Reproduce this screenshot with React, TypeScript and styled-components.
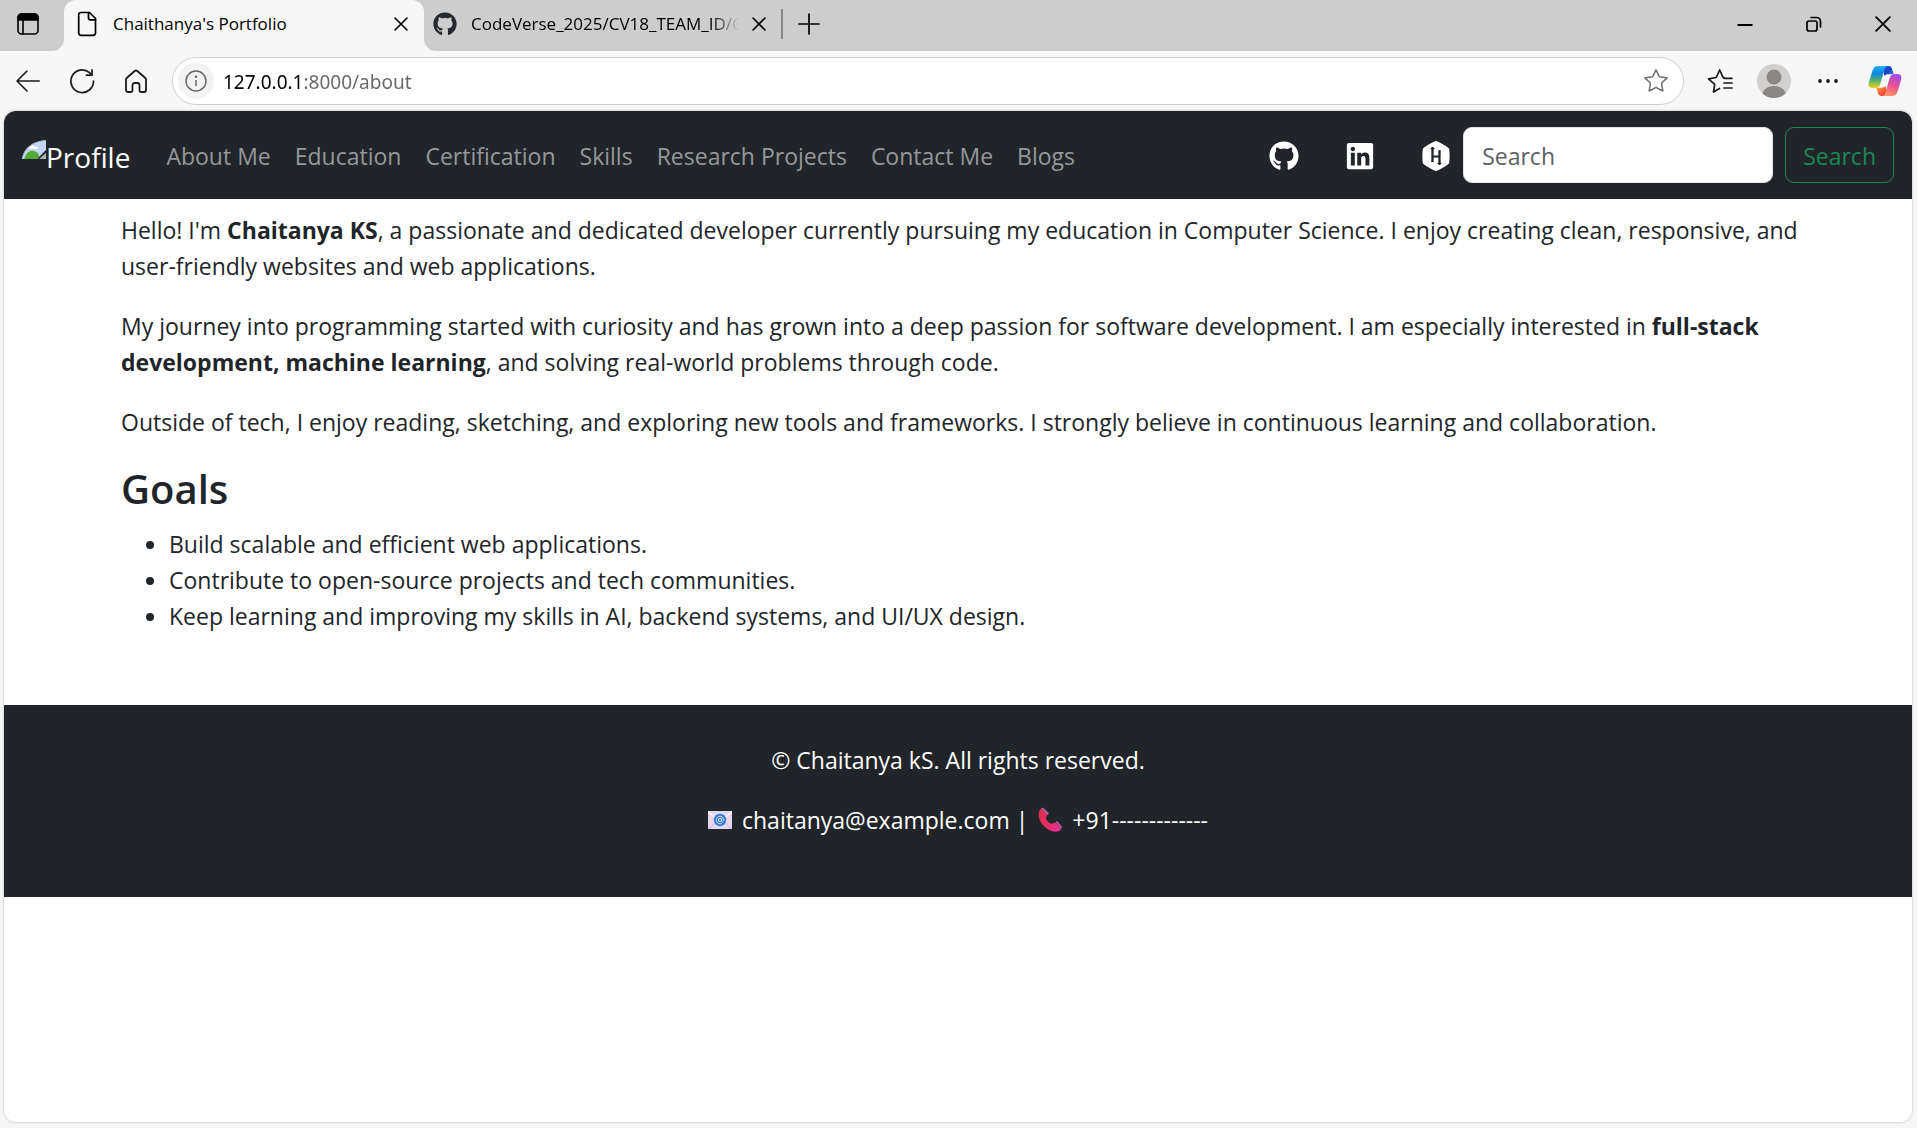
import React from "react";
import styled, { createGlobalStyle } from "styled-components";
import { FaGithub, FaLinkedin, FaHackerrank } from "react-icons/fa";

const ink = "#212529";
const strip = "#cdcdcd";
const chrome = "#f7f7f7";

const GlobalStyle = createGlobalStyle`
  *, *::before, *::after { box-sizing: border-box; }
  body {
    margin: 0;
    background: ${chrome};
    color: ${ink};
    font-family: "Open Sans", "Noto Sans", sans-serif;
    font-size: 23px;
    line-height: 36px;
  }
  button, input { font: inherit; color: inherit; }
  svg { display: block; flex: none; }
`;

const Window = styled.div`
  display: flex;
  flex-direction: column;
  min-height: 100vh;
`;

const TabStrip = styled.div`
  display: flex;
  height: 51px;
  background: ${chrome};
  font-size: 17px;
  line-height: 24px;
  color: #000;
`;

const StripStart = styled.div`
  display: flex;
  align-items: center;
  width: 64px;
  padding: 0 0 3px 16px;
  background: ${strip};
  border-bottom-right-radius: 12px;
`;

const StripRest = styled.div`
  display: flex;
  flex: 1;
  align-items: center;
  padding: 0 0 3px 9px;
  background: ${strip};
  border-bottom-left-radius: 12px;
`;

const ActiveTabCell = styled.div`
  width: 360px;
  background: ${strip};
`;

const ActiveTab = styled.div`
  display: flex;
  align-items: center;
  height: 100%;
  padding: 0 11px 3px 11px;
  background: ${chrome};
  border-radius: 12px 12px 0 0;
`;

const TabTitle = styled.span<{ $fade?: boolean }>`
  flex: ${(p) => (p.$fade ? "0 0 276px" : "1")};
  margin-left: 14px;
  overflow: hidden;
  white-space: nowrap;
  ${(p) => p.$fade && "mask-image: linear-gradient(90deg, #000 240px, transparent 268px);"}
`;

const IconButton = styled.button<{ $w?: number }>`
  display: flex;
  align-items: center;
  justify-content: center;
  width: ${(p) => p.$w ?? 24}px;
  height: 48px;
  padding: 0;
  border: 0;
  background: none;
`;

const TabDivider = styled.span`
  width: 2px;
  height: 30px;
  margin: 0 8px 0 10px;
  background: #8a8a8a;
`;

const WindowControls = styled.div`
  display: flex;
  margin-left: auto;
`;

const Toolbar = styled.div`
  display: flex;
  align-items: center;
  height: 60px;
  padding: 0 2px 0 1px;
  color: #1a1a1a;
`;

const AddressBar = styled.form`
  display: flex;
  flex: 1;
  align-items: center;
  height: 48px;
  margin: 0 9px;
  padding: 0 9px 0 5px;
  border: 1px solid #cfcfcf;
  border-radius: 24px;
  background: #fff;
`;

const InfoButton = styled.button`
  display: flex;
  align-items: center;
  justify-content: center;
  width: 36px;
  height: 36px;
  padding: 0;
  border: 0;
  border-radius: 50%;
  background: #f3f3f3;
`;

const AddressInput = styled.input`
  flex: 1;
  min-width: 0;
  height: 36px;
  margin-left: 9px;
  padding: 1px 0 0;
  border: 0;
  outline: 0;
  font-family: "Noto Sans", sans-serif;
  font-size: 19px;
  color: #666;
  background: linear-gradient(90deg, #000 82px, #666 82px);
  background-clip: text;
  -webkit-text-fill-color: transparent;
`;

const Page = styled.div`
  flex: 1;
  margin: 0 5px 6px 4px;
  overflow: hidden;
  background: #fff;
  border-radius: 12px;
  box-shadow: 0 0 3px rgba(0, 0, 0, 0.25);
`;

const Navbar = styled.nav`
  display: flex;
  align-items: center;
  padding: 16px 18px;
  background: ${ink};
`;

const Brand = styled.a`
  display: flex;
  margin-right: 24px;
  padding-top: 4px;
  color: #fff;
  font-size: 28px;
  text-decoration: none;
`;

const NavLinks = styled.ul`
  display: flex;
  flex: 1;
  margin: 0;
  padding: 0;
  list-style: none;
`;

const NavLink = styled.a`
  display: block;
  padding: 2px 12px 0;
  color: #96989a;
  text-decoration: none;
  white-space: nowrap;
`;

const Social = styled.div`
  display: flex;
  gap: 22px;
`;

const SocialLink = styled.a`
  display: block;
  padding: 2px 12px 0;
  color: #fff;
  font-size: 30px;
`;

const SearchForm = styled.form`
  display: flex;
  gap: 12px;
`;

const SearchInput = styled.input`
  width: 310px;
  height: 56px;
  padding: 2px 18px 0;
  border: 1px solid #dee2e6;
  border-radius: 9px;
  background: #fff;
  &::placeholder { color: #5c6065; opacity: 1; }
`;

const SearchButton = styled.button`
  height: 56px;
  padding: 2px 17px 0;
  border: 1px solid #198754;
  border-radius: 9px;
  background: transparent;
  color: #198754;
`;

const Main = styled.main`
  max-width: 1710px;
  margin: 0 auto;
  padding: 13px 12px 47px 18px;
`;

const Paragraph = styled.p`
  margin: 0 0 24px;
`;

const GoalsTitle = styled.h2`
  margin: 0 0 12px;
  font-size: 40px;
  font-weight: 600;
  line-height: 50px;
`;

const GoalList = styled.ul`
  margin: 0 0 24px;
  padding-left: 48px;
`;

const Footer = styled.footer`
  padding: 37px 0 35px;
  background: ${ink};
  color: #fff;
  text-align: center;
`;

const Contact = styled(Paragraph)`
  display: flex;
  justify-content: center;
  align-items: center;
  gap: 10px;
`;

const line = { fill: "none", stroke: "currentColor", strokeLinecap: "round", strokeLinejoin: "round" } as const;

const TabMenuIcon = () => (
  <svg width="24" height="24" viewBox="0 0 24 24" {...line} strokeWidth="1.6">
    <rect x="2" y="2" width="20" height="20" rx="3.5" />
    <path d="M2 8V5.500A3.500 3.500 0 0 1 5.500 2h13A3.500 3.500 0 0 1 22 5.500V8z" fill="currentColor" />
    <path d="M7 8v14" />
  </svg>
);
const FileIcon = () => (
  <svg width="24" height="26" viewBox="0 0 24 26" {...line} strokeWidth="1.700">
    <path d="M6 1.500h8.500L20.500 7.500V22a2.300 2.300 0 0 1-2.300 2.300H6A2.300 2.300 0 0 1 3.700 22V3.800A2.300 2.300 0 0 1 6 1.500z" />
    <path d="M13.500 1.800v5a2 2 0 0 0 2 2h5" />
  </svg>
);
const CrossIcon = ({ size = 14 }: { size?: number }) => (
  <svg width={size} height={size} viewBox="0 0 14 14" {...line} strokeWidth="1.600">
    <path d="M1 1l12 12M13 1L1 13" />
  </svg>
);
const PlusIcon = () => (
  <svg width="22" height="22" viewBox="0 0 22 22" {...line} strokeWidth="1.700">
    <path d="M11 1v20M1 11h20" />
  </svg>
);
const MinimizeIcon = () => (
  <svg width="16" height="16" viewBox="0 0 16 16" stroke="currentColor" strokeWidth="2">
    <path d="M0.500 9h15" />
  </svg>
);
const RestoreIcon = () => (
  <svg width="16" height="16" viewBox="0 0 16 16" {...line} strokeWidth="1.700">
    <rect x="1" y="5" width="10" height="10" rx="2" />
    <path d="M5 1.500h5.500a4 4 0 0 1 4 4V11" />
  </svg>
);
const BackIcon = () => (
  <svg width="24" height="24" viewBox="0 0 24 24" {...line} strokeWidth="1.600">
    <path d="M23.200 12H1M11 2L1 12l10 10" />
  </svg>
);
const ReloadIcon = () => (
  <svg width="26" height="26" viewBox="0 0 26 26" {...line} strokeWidth="1.700">
    <path d="M24.500 13A11.300 11.300 0 1 1 20.500 4.600L22.800 7" />
    <path d="M23 1.800V7.200H17.500" />
  </svg>
);
const HomeIcon = () => (
  <svg width="24" height="26" viewBox="0 0 24 26" {...line} strokeWidth="1.800">
    <path d="M2 11.500a2 2 0 0 1 .7-1.500L10.700 3a2 2 0 0 1 2.600 0l8 7a2 2 0 0 1 .7 1.500V22a2 2 0 0 1-2 2h-3a1.500 1.500 0 0 1-1.500-1.500V17a2 2 0 0 0-2-2h-3a2 2 0 0 0-2 2v5.500A1.500 1.500 0 0 1 7 24H4a2 2 0 0 1-2-2z" />
  </svg>
);
const InfoIcon = () => (
  <svg width="22" height="22" viewBox="0 0 22 22" fill="none" stroke="#666" strokeWidth="1.500">
    <circle cx="11" cy="11" r="10" />
    <path d="M11 10v6" />
    <circle cx="11" cy="6.800" r="1.200" fill="#666" stroke="none" />
  </svg>
);
const starPath = "M13 1.800l3.400 7 7.700 1.100-5.600 5.400 1.400 7.700L13 19.300 6.100 23l1.400-7.700L1.900 9.900l7.700-1.100z";
const StarIcon = () => (
  <svg width="26" height="26" viewBox="0 0 26 26" {...line} stroke="#707070" strokeWidth="1.500">
    <path d={starPath} />
  </svg>
);
const FavoritesIcon = () => (
  <svg width="26" height="26" viewBox="0 0 26 26" {...line} strokeWidth="1.700">
    <path d="M12.500 20.500L6.500 24l1.200-7.700L1.500 10.800l7.700-1.300L12.700 2l3.300 7.300L17.500 10M17 10.300h8M17 15h8M17 20h8" />
  </svg>
);
const ProfileIcon = () => (
  <svg width="34" height="34" viewBox="0 0 34 34">
    <defs>
      <clipPath id="avatar"><circle cx="17" cy="17" r="17" /></clipPath>
    </defs>
    <g clipPath="url(#avatar)">
      <rect width="34" height="34" fill="#d2d0ce" />
      <circle cx="17" cy="13" r="7.500" fill="#8a8684" />
      <path d="M4 34c1-8 6-12 13-12s12 4 13 12z" fill="#8a8684" />
    </g>
  </svg>
);
const MoreIcon = () => (
  <svg width="22" height="6" viewBox="0 0 22 6" fill="currentColor">
    <circle cx="3" cy="3" r="1.900" /><circle cx="11" cy="3" r="1.900" /><circle cx="19" cy="3" r="1.900" />
  </svg>
);
const CopilotIcon = () => (
  <svg width="34" height="32" viewBox="0 0 34 32">
    <defs>
      <linearGradient id="cpLeft" x1="0" y1="0" x2="0" y2="1">
        <stop offset="0" stopColor="#22b5f0" /><stop offset=".35" stopColor="#0f83e0" />
        <stop offset=".65" stopColor="#4fb36a" /><stop offset="1" stopColor="#f4cf1c" />
      </linearGradient>
      <linearGradient id="cpRight" x1=".6" y1="0" x2=".3" y2="1">
        <stop offset="0" stopColor="#a44bea" /><stop offset=".5" stopColor="#ec5092" />
        <stop offset="1" stopColor="#ff9a62" />
      </linearGradient>
      <linearGradient id="cpTop" x1="0" y1="0" x2="1" y2="1">
        <stop offset="0" stopColor="#1267d8" /><stop offset=".5" stopColor="#1c3fc4" /><stop offset="1" stopColor="#2b86ea" />
      </linearGradient>
      <linearGradient id="cpBottom" x1="0" y1="0" x2="1" y2="1">
        <stop offset="0" stopColor="#ffb02e" /><stop offset=".6" stopColor="#f4553a" /><stop offset="1" stopColor="#df3c57" />
      </linearGradient>
    </defs>
    <path d="M14 1h6.500c2.300 0 3.200 1.500 3.900 4l1.300 4.300h-5c-2 0-3.300.6-4.200 1.700z" fill="url(#cpTop)" />
    <path d="M20 31h-6.500c-2.300 0-3.200-1.500-3.900-4l-1.300-4.300h5c2 0 3.300-.6 4.200-1.700z" fill="url(#cpBottom)" />
    <path d="M10 1h9.500c-2 .5-2.600 2-3.300 4.500L12.500 18.500c-.9 3.200-2.500 4.500-5.500 4.500H4.500C1 23 0 20.500 1 17L4.500 5.500C5.500 2.300 7 1 10 1z" fill="url(#cpLeft)" />
    <path d="M24 31H14.500c2-.5 2.600-2 3.300-4.500l3.700-13c.9-3.200 2.500-4.500 5.500-4.500h2.500c3.500 0 4.500 2.500 3.500 6l-3.500 11.500C28.500 29.700 27 31 24 31z" fill="url(#cpRight)" />
  </svg>
);
const BrokenImageIcon = () => (
  <svg width="24" height="36" viewBox="0 0 24 36">
    <defs>
      <clipPath id="picture"><path d="M0 20C1 10 10 2 24 1v10L15 20z" /></clipPath>
    </defs>
    <g clipPath="url(#picture)">
      <rect width="24" height="21" fill="#c3d5f5" />
      <path d="M6 10c2-4 5-5 7-2 2-1 3 0 3 2z" fill="#fff" />
      <path d="M2 21c2-8 6-10 10-9s5 3 6 9z" fill="#54ab35" />
      <path d="M0 20C1 10 10 2 24 1" fill="none" stroke="#9aa3b0" strokeWidth="1.500" />
    </g>
    <path d="M17 20l7-6v6z" fill="#a9b8ab" />
  </svg>
);
const MailIcon = () => (
  <svg width="24" height="20" viewBox="0 0 24 20">
    <rect y="1" width="24" height="18" fill="#e6d8ee" />
    <path d="M0 1l12 9L24 1v2l-12 9L0 3z" fill="#f6eff9" />
    <path d="M0 19l8-7M24 19l-8-7" stroke="#cdb6e2" />
    <circle cx="12" cy="10" r="6.200" fill="#3b7ed6" />
    <circle cx="12" cy="10" r="1.600" fill="none" stroke="#d5e4fa" />
    <path d="M13.700 8.300v2.200c0 1.600 2 1.200 2-.5a3.700 3.700 0 1 0-1.700 3.100" fill="none" stroke="#d5e4fa" strokeWidth=".9" />
  </svg>
);
const PhoneIcon = () => (
  <svg width="24" height="26" viewBox="0 0 24 26">
    <defs>
      <linearGradient id="phone" x1="0" y1="0" x2="1" y2="1">
        <stop offset="0" stopColor="#dd2f4a" /><stop offset=".55" stopColor="#e2305f" /><stop offset="1" stopColor="#ee2fa4" />
      </linearGradient>
    </defs>
    <path d="M3 1.500L9.500 7.500l-1.700 3.800c1 2.400 2.800 4.300 5.200 5.400l4.500-1.200 6 6c-2 3.500-6.500 4-10.500 2.300C7 21.300 2.500 16.500 1 10.500.2 6.700.8 3 3 1.500z" fill="url(#phone)" />
    <path d="M3 1.500l2-1 6 5.800-1.500 1.600zM17.500 15.300l1.700-1.200 4.800 5.600-.6 1.700z" fill="#b05aa0" />
  </svg>
);

const links = ["About Me", "Education", "Certification", "Skills", "Research Projects", "Contact Me", "Blogs"];
const goals = [
  "Build scalable and efficient web applications.",
  "Contribute to open-source projects and tech communities.",
  "Keep learning and improving my skills in AI, backend systems, and UI/UX design.",
];
const socials = [
  { name: "GitHub", Icon: FaGithub },
  { name: "LinkedIn", Icon: FaLinkedin },
  { name: "HackerRank", Icon: FaHackerrank },
];

export default function App() {
  return (
    <Window>
      <GlobalStyle />
      <TabStrip>
        <StripStart>
          <IconButton aria-label="Tab actions"><TabMenuIcon /></IconButton>
        </StripStart>
        <ActiveTabCell>
          <ActiveTab>
            <FileIcon />
            <TabTitle>Chaithanya's Portfolio</TabTitle>
            <IconButton aria-label="Close tab"><CrossIcon /></IconButton>
          </ActiveTab>
        </ActiveTabCell>
        <StripRest>
          <FaGithub size={24} color="#24292f" />
          <TabTitle $fade>CodeVerse_2025/CV18_TEAM_ID/C</TabTitle>
          <IconButton aria-label="Close tab"><CrossIcon /></IconButton>
          <TabDivider />
          <IconButton $w={36} aria-label="New tab"><PlusIcon /></IconButton>
          <WindowControls>
            <IconButton $w={69} aria-label="Minimize"><MinimizeIcon /></IconButton>
            <IconButton $w={69} aria-label="Restore"><RestoreIcon /></IconButton>
            <IconButton $w={69} aria-label="Close window"><CrossIcon size={16} /></IconButton>
          </WindowControls>
        </StripRest>
      </TabStrip>
      <Toolbar>
        <IconButton $w={54} aria-label="Back"><BackIcon /></IconButton>
        <IconButton $w={54} aria-label="Refresh"><ReloadIcon /></IconButton>
        <IconButton $w={54} aria-label="Home"><HomeIcon /></IconButton>
        <AddressBar>
          <InfoButton type="button" aria-label="Site information"><InfoIcon /></InfoButton>
          <AddressInput aria-label="Address" defaultValue="127.0.0.1:8000/about" />
          <IconButton $w={36} type="button" aria-label="Add to favorites"><StarIcon /></IconButton>
        </AddressBar>
        <IconButton $w={54} aria-label="Favorites"><FavoritesIcon /></IconButton>
        <IconButton $w={54} aria-label="Profile"><ProfileIcon /></IconButton>
        <IconButton $w={54} aria-label="More"><MoreIcon /></IconButton>
        <IconButton $w={60} aria-label="Copilot"><CopilotIcon /></IconButton>
      </Toolbar>
      <Page>
        <Navbar>
          <Brand href="#"><BrokenImageIcon />Profile</Brand>
          <NavLinks>
            {links.map((l) => (
              <li key={l}><NavLink href="#">{l}</NavLink></li>
            ))}
          </NavLinks>
          <Social>
            {socials.map(({ name, Icon }) => (
              <SocialLink key={name} href="#" aria-label={name}><Icon /></SocialLink>
            ))}
          </Social>
          <SearchForm>
            <SearchInput type="search" placeholder="Search" aria-label="Search" />
            <SearchButton type="button">Search</SearchButton>
          </SearchForm>
        </Navbar>
        <Main>
          <Paragraph>
            Hello! I'm <strong>Chaitanya KS</strong>, a passionate and dedicated developer currently pursuing my
            education in Computer Science. I enjoy creating clean, responsive, and user-friendly websites and web
            applications.
          </Paragraph>
          <Paragraph>
            My journey into programming started with curiosity and has grown into a deep passion for software
            development. I am especially interested in <strong>full-stack development, machine learning</strong>, and
            solving real-world problems through code.
          </Paragraph>
          <Paragraph>
            Outside of tech, I enjoy reading, sketching, and exploring new tools and frameworks. I strongly believe in
            continuous learning and collaboration.
          </Paragraph>
          <GoalsTitle>Goals</GoalsTitle>
          <GoalList>
            {goals.map((g) => <li key={g}>{g}</li>)}
          </GoalList>
        </Main>
        <Footer>
          <Paragraph>© Chaitanya kS. All rights reserved.</Paragraph>
          <Contact>
            <MailIcon />
            <span>chaitanya@example.com |</span>
            <PhoneIcon />
            <span>+91-------------</span>
          </Contact>
        </Footer>
      </Page>
    </Window>
  );
}
